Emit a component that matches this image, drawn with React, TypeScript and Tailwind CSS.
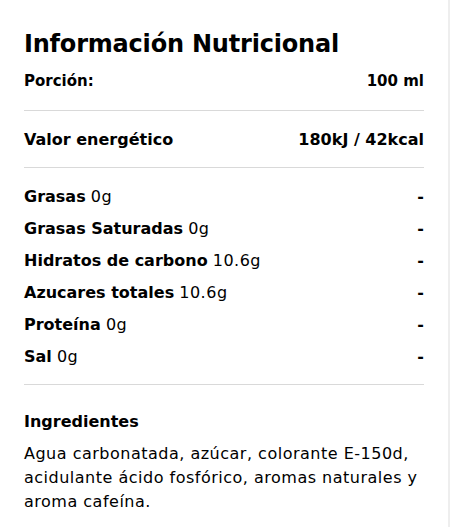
const FONT = "font-['DejaVu_Sans',sans-serif]";

const nutrients = [
  { label: "Grasas", value: "0g" },
  { label: "Grasas Saturadas", value: "0g" },
  { label: "Hidratos de carbono", value: "10.6g" },
  { label: "Azucares totales", value: "10.6g" },
  { label: "Proteína", value: "0g" },
  { label: "Sal", value: "0g" },
];

export default function App() {
  return (
    <div className={`w-[450px] h-[527px] bg-white border-r-2 border-[#eeeeee] px-6 text-black ${FONT}`}>
      <h2 className="pt-7 text-[24px] leading-[32px] font-bold tracking-[-0.2px]">Información Nutricional</h2>

      {/* Porción */}
      <div className="mt-[9px] pb-[17px] border-b border-[#d9d9d9] flex justify-between text-[15px] leading-6 font-bold">
        <span>Porción:</span>
        <span>100 ml</span>
      </div>

      {/* Energy */}
      <div className="pt-[17px] pb-[15px] border-b border-[#d9d9d9] flex justify-between text-base leading-6 font-bold">
        <span>Valor energético</span>
        <span>180kJ / 42kcal</span>
      </div>

      {/* Nutrients */}
      <div className="pt-[17px] pb-[15px] border-b border-[#d9d9d9] flex flex-col gap-2">
        {nutrients.map((n) => (
          <div key={n.label} className="flex justify-between text-base leading-6">
            <span>
              <span className="font-bold">{n.label}</span>{" "}
              <span className="tracking-[0.5px]">{n.value}</span>
            </span>
            <span className="font-bold">-</span>
          </div>
        ))}
      </div>

      {/* Ingredients */}
      <div className="pt-[25px]">
        <h3 className="text-base leading-6 font-bold">Ingredientes</h3>
        <p className="mt-2 text-base leading-6 tracking-[0.5px]">
          Agua carbonatada, azúcar, colorante E-150d, acidulante ácido fosfórico, aromas naturales y aroma cafeína.
        </p>
      </div>
    </div>
  );
}
